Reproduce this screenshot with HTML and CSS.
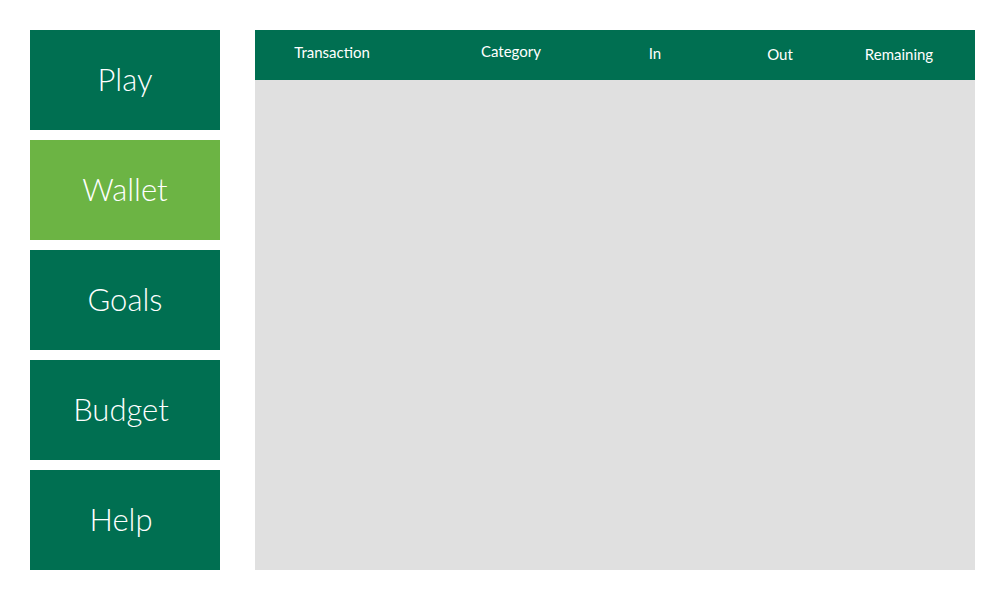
FILE: index.html
```html
<!DOCTYPE html>
<html>
<head>
<meta charset="utf-8">
<link rel="stylesheet" href="styles.css">
</head>
<body>
<div class="app">
  <nav class="menu">
    <div class="item">Play</div>
    <div class="item active">Wallet</div>
    <div class="item">Goals</div>
    <div class="item shift">Budget</div>
    <div class="item shift">Help</div>
  </nav>
  <main class="panel">
    <div class="head">
      <div class="col c1">Transaction</div>
      <div class="col c2">Category</div>
      <div class="col c3">In</div>
      <div class="col c4">Out</div>
      <div class="col c5">Remaining</div>
    </div>
    <div class="body"></div>
  </main>
</div>
</body>
</html>
```
FILE: styles.css
```css
html, body {
  margin: 0;
  padding: 0;
  background: #ffffff;
}
.app {
  display: flex;
  padding: 30px 25px 30px 30px;
  gap: 35px;
  height: 540px;
}
.menu {
  display: flex;
  flex-direction: column;
  gap: 10px;
  width: 190px;
}
.item {
  height: 100px;
  background: #006f51;
  color: #ffffff;
  font-family: "Lato", "Open Sans", sans-serif;
  font-weight: 300;
  font-size: 31px;
  display: flex;
  align-items: center;
  justify-content: center;
  padding-bottom: 2px;
  box-sizing: border-box;
}
.item.shift {
  padding-right: 8px;
}
.item.active {
  background: #6cb444;
}
.panel {
  flex: 1;
  display: flex;
  flex-direction: column;
  width: 720px;
}
.head {
  height: 50px;
  background: #006f51;
  color: #ffffff;
  font-family: "Lato", "Open Sans", sans-serif;
  font-size: 15px;
  display: grid;
  grid-template-columns: 154px 204px 84px 166px 72px 40px;
  align-items: center;
}
.col {
  text-align: center;
  white-space: nowrap;
}
.c1 { padding-bottom: 6px; }
.c2 { padding-bottom: 8px; }
.c3 { padding-bottom: 4px; }
.c4 { padding-bottom: 2px; }
.c5 { padding-bottom: 2px; }
.body {
  flex: 1;
  background: #e0e0e0;
}
```
